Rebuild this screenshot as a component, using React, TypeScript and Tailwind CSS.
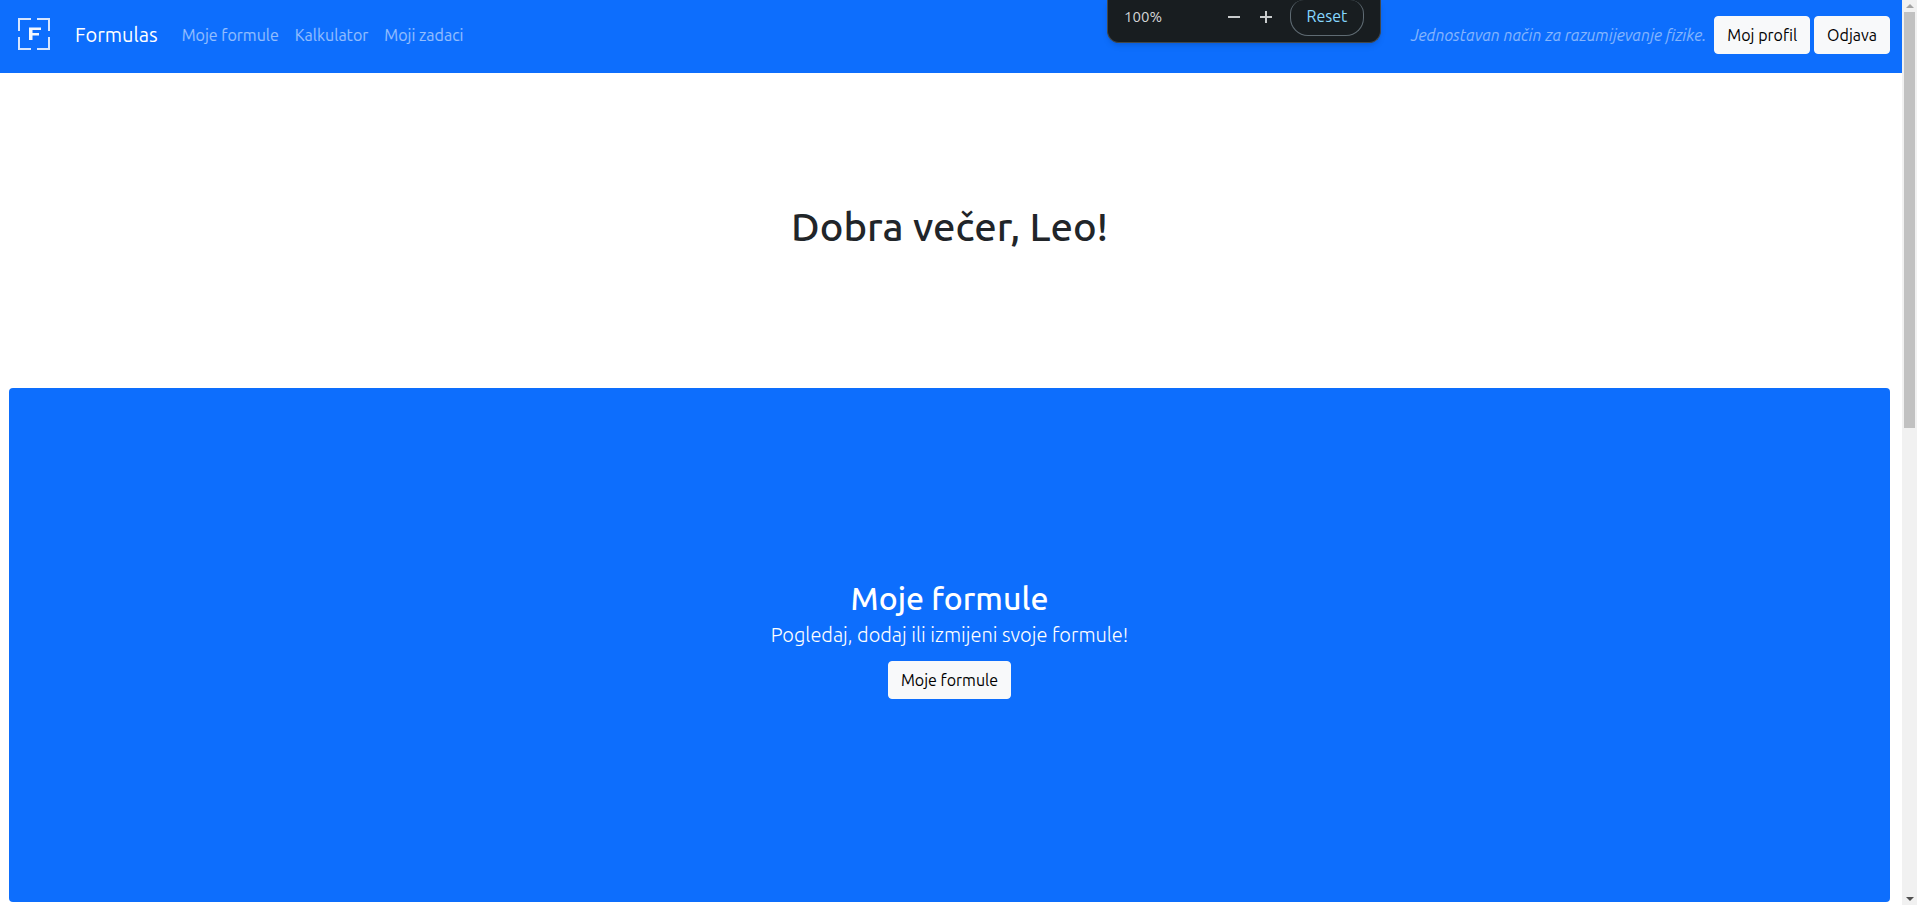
import type { ReactNode } from "react";

const navLinks = ["Moje formule", "Kalkulator", "Moji zadaci"];

function Logo() {
  return (
    <svg className="mb-0.5" width="32" height="32" viewBox="0 0 32 32" fill="none" aria-hidden="true">
      <path
        d="M0 13V1H13M19 1H31V13M31 19V31H19M13 31H1V19M1 13V1"
        stroke="#d5e5ff"
        strokeWidth="2"
      />
      <path d="M11 9.5H23V12H14.5V15H21V17.5H14.5V22H11Z" fill="#f3f8ff" />
    </svg>
  );
}

function LightButton({ children }: { children: ReactNode }) {
  return (
    <button
      type="button"
      className="h-[38px] whitespace-nowrap rounded border border-[#f8f9fa] bg-[#f8f9fa] px-3 text-[16px] leading-6 text-black"
    >
      {children}
    </button>
  );
}

function ZoomBubble() {
  return (
    <div className="absolute top-0 right-[536px] flex h-[43px] w-[274px] items-start rounded-b-xl border border-t-0 border-[#41474a] bg-[#181d20] pl-4 shadow-md">
      <span className="w-[99px] pt-[7px] text-[15px] leading-5 text-[#d3d5d6]">100%</span>
      <button type="button" aria-label="Zoom out" className="mt-2 flex h-[18px] w-8 items-center justify-start pl-1">
        <svg width="14" height="14" viewBox="0 0 14 14" aria-hidden="true">
          <path d="M1 7H13" stroke="#c8cbcc" strokeWidth="2" />
        </svg>
      </button>
      <button type="button" aria-label="Zoom in" className="mt-2 flex h-[18px] w-8 items-center justify-start pl-1">
        <svg width="14" height="14" viewBox="0 0 14 14" aria-hidden="true">
          <path d="M1 7H13M7 1V13" stroke="#c8cbcc" strokeWidth="2" />
        </svg>
      </button>
      <button
        type="button"
        className="ml-[3px] h-9 w-[74px] rounded-b-[18px] rounded-t-[14px] border border-t-0 border-[#5f6b73] pb-1 text-[16px] leading-5 text-[#86d8ff]"
      >
        Reset
      </button>
    </div>
  );
}

function ScrollBar() {
  return (
    <div className="flex w-[15px] shrink-0 flex-col items-center bg-[#f1f1f1]" aria-hidden="true">
      <div className="flex h-3 items-center">
        <svg width="8" height="4" viewBox="0 0 8 4">
          <path d="M0 4L4 0L8 4Z" fill="#a3a3a3" />
        </svg>
      </div>
      <div className="h-[46%] w-[11px] bg-[#c1c1c1]" />
      <div className="mt-auto flex h-3 items-center">
        <svg width="8" height="4" viewBox="0 0 8 4">
          <path d="M0 0L4 4L8 0Z" fill="#505050" />
        </svg>
      </div>
    </div>
  );
}

export default function App() {
  return (
    <div className="relative flex min-h-screen bg-white font-['Ubuntu','Noto_Sans',sans-serif] text-[#212529]">
      <div className="flex min-w-0 grow flex-col">
        <header className="flex h-[73px] items-start bg-[#0d6efd] pt-4 pr-3 pl-[18px]">
          <div className="flex h-[38px] grow items-center">
            <a href="#" className="flex items-center gap-[25px] text-[20px] leading-[30px] text-white">
              <Logo />
              Formulas
            </a>
            <nav className="ml-4 flex text-[16px] leading-6 text-white/55">
              {navLinks.map((label) => (
                <a key={label} href="#" className="px-2">
                  {label}
                </a>
              ))}
            </nav>
          </div>
          <div className="flex items-center gap-1">
            <span className="pr-1 text-[16px] leading-6 italic text-white/50">
              Jednostavan način za razumijevanje fizike.
            </span>
            <LightButton>Moj profil</LightButton>
            <LightButton>Odjava</LightButton>
          </div>
        </header>

        <main className="flex grow flex-col pr-3 pb-[3px] pl-[9px]">
          <div className="flex h-[315px] items-center justify-center pb-2">
            <h1 className="text-[40px] leading-[48px] font-medium">Dobra večer, Leo!</h1>
          </div>
          <section className="flex grow flex-col items-center justify-center rounded bg-[#0d6efd] pb-[13px] text-center">
            <h2 className="mb-0.5 text-[32px] leading-[40px] font-medium text-white">Moje formule</h2>
            <p className="mb-[11px] text-[20px] leading-[30px] font-light text-white">
              Pogledaj, dodaj ili izmijeni svoje formule!
            </p>
            <LightButton>Moje formule</LightButton>
          </section>
        </main>
      </div>
      <ScrollBar />
      <ZoomBubble />
    </div>
  );
}
